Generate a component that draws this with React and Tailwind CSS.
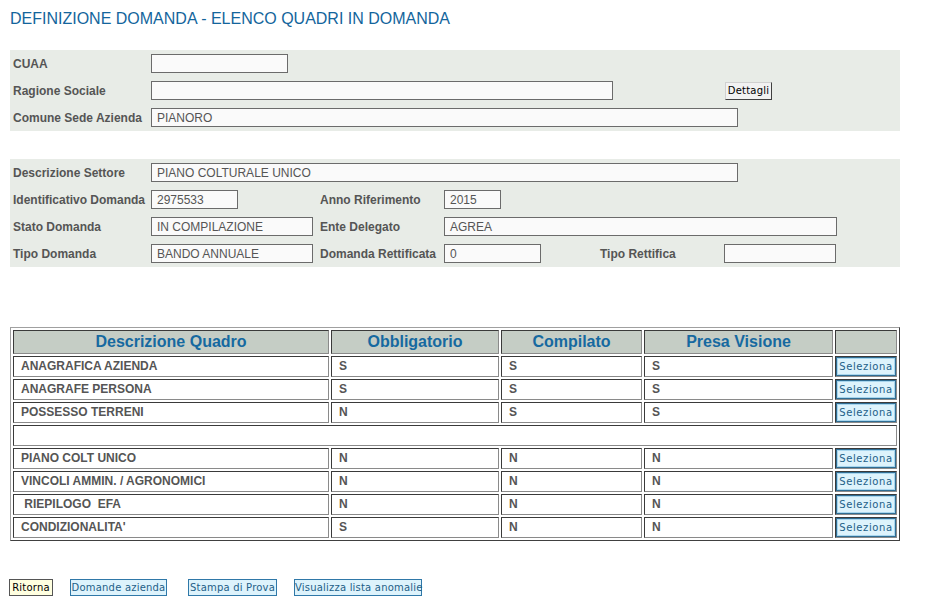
import React from 'react'

const font = { fontFamily: '"Liberation Sans", Arial, sans-serif' }

function Field({ value = '', w }) {
    return (
        <div
            className="h-[19px] border border-[#6b6b6b] bg-[#fafafa] px-[5px] text-[12px] leading-[18px] text-[#555] whitespace-nowrap overflow-hidden"
            style={{ width: w }}
        >
            {value}
        </div>
    )
}

function Label({ children, w = 138 }) {
    return (
        <div className="shrink-0 h-[19px] text-[12px] font-bold text-[#555] leading-[21px] whitespace-nowrap" style={{ width: w }}>
            {children}
        </div>
    )
}

const rows = [
    ['ANAGRAFICA AZIENDA', 'S', 'S', 'S'],
    ['ANAGRAFE PERSONA', 'S', 'S', 'S'],
    ['POSSESSO TERRENI', 'N', 'S', 'S'],
    null,
    ['PIANO COLT UNICO', 'N', 'N', 'N'],
    ['VINCOLI AMMIN. / AGRONOMICI', 'N', 'N', 'N'],
    [' RIEPILOGO  EFA', 'N', 'N', 'N'],
    ["CONDIZIONALITA'", 'S', 'N', 'N'],
]

const cell = 'border border-t-[#3a3a3a] border-l-[#3a3a3a] border-b-[#8a8a8a] border-r-[#8a8a8a] p-0'

function Seleziona() {
    return (
        <button
            className="block mx-auto h-[19px] w-[60px] border border-[#2f6d93] bg-[#ddf3fc] shadow-[inset_0_0_0_1px_#a8d6ee] text-[10px] leading-[17px] tracking-[0.6px] text-[#1d5f88]"
            style={{ fontFamily: '"DejaVu Sans", Verdana, sans-serif' }}
        >
            Seleziona
        </button>
    )
}

export default function App() {
    return (
        <div className="min-h-screen w-[933px] bg-white pl-[10px] pt-[10px]" style={font}>
            <h1 className="text-[16px] leading-[18px] font-normal text-[#13659c]">
                DEFINIZIONE DOMANDA - ELENCO QUADRI IN DOMANDA
            </h1>

            {/* Dati azienda */}
            <div className="mt-[22px] w-[890px] bg-[#e8ece7] pl-[3px] pt-[4px] pb-[4px] flex flex-col gap-[8px]">
                <div className="flex items-center">
                    <Label>CUAA</Label>
                    <Field w={137} />
                </div>
                <div className="flex items-center">
                    <Label>Ragione Sociale</Label>
                    <Field w={462} />
                    <button
                        className="ml-[112px] h-[18px] w-[47px] border border-t-[#d0d0d0] border-l-[#d0d0d0] border-b-[#404040] border-r-[#404040] bg-[#f2f2f2] text-[10px] leading-[16px] tracking-[0.2px] text-black whitespace-nowrap"
                        style={{ fontFamily: '"DejaVu Sans", Verdana, sans-serif' }}
                    >
                        Dettagli
                    </button>
                </div>
                <div className="flex items-center">
                    <Label>Comune Sede Azienda</Label>
                    <Field w={587} value="PIANORO" />
                </div>
            </div>

            {/* Dati domanda */}
            <div className="mt-[28px] w-[890px] bg-[#e8ece7] pl-[3px] pt-[4px] pb-[4px] flex flex-col gap-[8px]">
                <div className="flex items-center">
                    <Label>Descrizione Settore</Label>
                    <Field w={587} value="PIANO COLTURALE UNICO" />
                </div>
                <div className="flex items-center">
                    <Label>Identificativo Domanda</Label>
                    <div className="w-[169px] shrink-0"><Field w={87} value="2975533" /></div>
                    <Label w={124}>Anno Riferimento</Label>
                    <Field w={57} value="2015" />
                </div>
                <div className="flex items-center">
                    <Label>Stato Domanda</Label>
                    <div className="w-[169px] shrink-0"><Field w={162} value="IN COMPILAZIONE" /></div>
                    <Label w={124}>Ente Delegato</Label>
                    <Field w={393} value="AGREA" />
                </div>
                <div className="flex items-center">
                    <Label>Tipo Domanda</Label>
                    <div className="w-[169px] shrink-0"><Field w={162} value="BANDO ANNUALE" /></div>
                    <Label w={124}>Domanda Rettificata</Label>
                    <div className="w-[156px] shrink-0"><Field w={97} value="0" /></div>
                    <Label w={124}>Tipo Rettifica</Label>
                    <Field w={112} />
                </div>
            </div>

            {/* Elenco quadri */}
            <table
                className="mt-[60px] w-[890px] table-fixed border-separate border-spacing-[2px] border border-t-[#a0a0a0] border-l-[#a0a0a0] border-b-[#404040] border-r-[#404040]"
            >
                <colgroup>
                    <col className="w-[316px]" />
                    <col className="w-[168px]" />
                    <col className="w-[141px]" />
                    <col className="w-[189px]" />
                    <col className="w-[62px]" />
                </colgroup>
                <thead>
                    <tr className="h-[24px]">
                        {['Descrizione Quadro', 'Obbligatorio', 'Compilato', 'Presa Visione', ''].map((h, i) => (
                            <th key={i} className={`${cell} bg-[#c5cdc5] text-center text-[16px] leading-[20px] font-bold text-[#1669a0]`}>
                                {h}
                            </th>
                        ))}
                    </tr>
                </thead>
                <tbody>
                    {rows.map((r, i) =>
                        r === null ? (
                            <tr key={i} className="h-[21px]">
                                <td colSpan={5} className={cell}></td>
                            </tr>
                        ) : (
                            <tr key={i} className="h-[21px]">
                                {r.map((v, j) => (
                                    <td key={j} className={`${cell} pl-[7px] text-[12px] leading-[19px] font-bold text-[#555] whitespace-pre`}>
                                        {v}
                                    </td>
                                ))}
                                <td className={cell}>
                                    <Seleziona />
                                </td>
                            </tr>
                        )
                    )}
                </tbody>
            </table>

            {/* Pulsanti */}
            <div
                className="mt-[38px] flex items-center text-[10px] tracking-[0.2px] whitespace-nowrap"
                style={{ fontFamily: '"DejaVu Sans", Verdana, sans-serif' }}
            >
                <button className="-ml-[1px] h-[17px] w-[44px] border border-[#555] bg-[#ffffe0] leading-[15px] text-black whitespace-nowrap">
                    Ritorna
                </button>
                <button className="ml-[17px] h-[17px] w-[97px] border border-[#2f78a8] bg-[#ddf3fc] leading-[15px] text-[#1d5f88] whitespace-nowrap">
                    Domande azienda
                </button>
                <button className="ml-[21px] h-[17px] w-[89px] border border-[#2f78a8] bg-[#ddf3fc] leading-[15px] text-[#1d5f88] whitespace-nowrap">
                    Stampa di Prova
                </button>
                <button className="ml-[17px] h-[17px] w-[128px] border border-[#2f78a8] bg-[#ddf3fc] leading-[15px] text-[#1d5f88] whitespace-nowrap">
                    Visualizza lista anomalie
                </button>
            </div>
        </div>
    )
}
